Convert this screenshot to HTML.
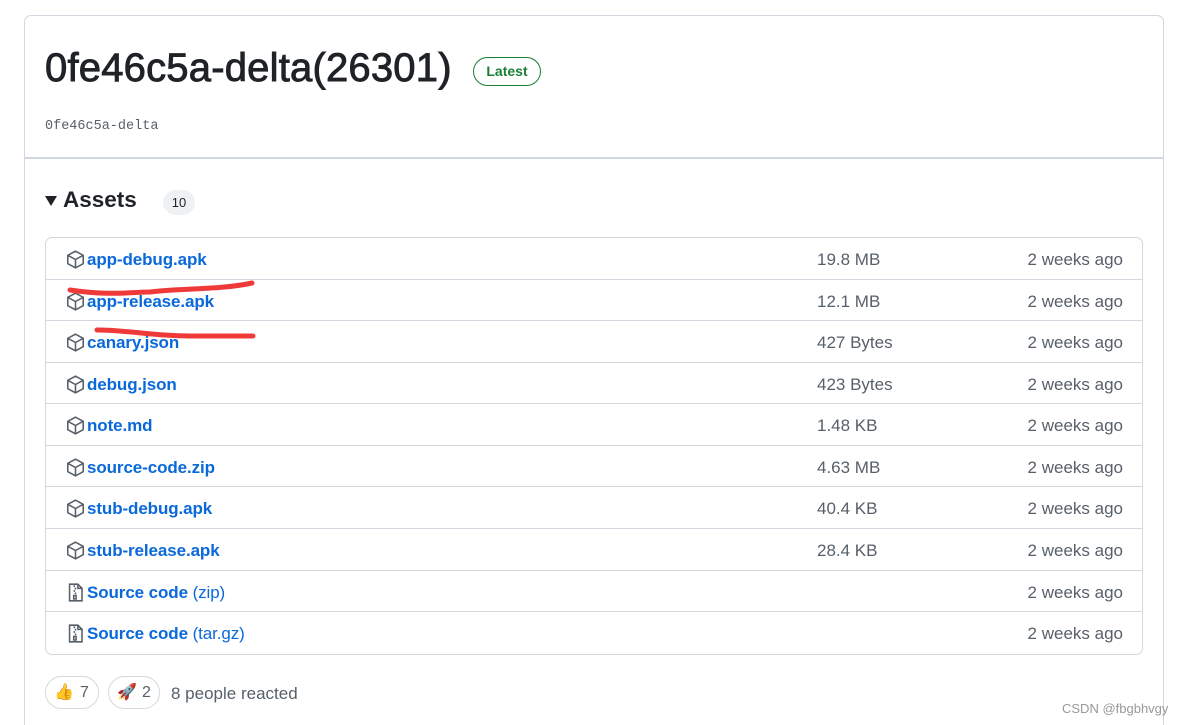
<!DOCTYPE html>
<html><head><meta charset="utf-8"><style>
*{margin:0;padding:0;box-sizing:border-box}
html{overflow:hidden;height:725px}
body{width:1183px;height:725px;background:#fff;position:relative;overflow:hidden;font-family:"Liberation Sans","DejaVu Sans",sans-serif;color:#1f2328}
.card{position:absolute;left:24px;top:15px;width:1140px;height:720px;border:1px solid #d0d7de;border-radius:7px}
.hr{position:absolute;left:24px;top:157px;width:1140px;height:2px;background:#d0d7de}
h1{position:absolute;left:45px;top:42px;font-size:40px;font-weight:normal;-webkit-text-stroke:0.9px #1f2328;line-height:52px;letter-spacing:0.2px}
.latest{position:absolute;left:473px;top:57px;width:68px;height:29px;border:1px solid #1a7f37;border-radius:15px;color:#1a7f37;font-size:14px;font-weight:600;text-align:center;line-height:27px}
.tag{position:absolute;left:45px;top:119px;font-family:"Liberation Mono","DejaVu Sans Mono",monospace;font-size:13.5px;color:#57606a}
.assets{position:absolute;left:63px;top:185px;font-size:22.5px;font-weight:600;line-height:30px}
.tri{position:absolute;left:45px;top:196px;width:0;height:0;border-left:6px solid transparent;border-right:6px solid transparent;border-top:10px solid #1f2328}
.cnt{position:absolute;left:163px;top:190px;width:32px;height:25px;background:#eff1f3;border-radius:13px;font-size:13px;text-align:center;line-height:25px}
.box{position:absolute;left:45px;top:237px;width:1098px;height:418px;border:1px solid #d0d7de;border-radius:7px}
.row{position:absolute;left:45px;width:1098px;height:42px}
.row.b{border-top:1px solid #d0d7de}
.ic{position:absolute;left:21px;top:12px}
.nm{position:absolute;left:42px;top:12px;font-size:17px;color:#0969da;font-weight:bold;white-space:nowrap;letter-spacing:-0.1px}
.nm span{font-weight:400}
.sz{position:absolute;left:772px;top:12px;font-size:17px;color:#57606a}
.dt{position:absolute;right:20px;top:12px;font-size:17px;color:#57606a}
.react{position:absolute;top:676px;height:33px;border:1px solid #d0d7de;border-radius:17px;font-size:16px;color:#57606a;line-height:31px}
.ppl{position:absolute;left:171px;top:684px;font-size:17px;color:#57606a}
.wm{position:absolute;left:1062px;top:701px;font-size:13px;color:#999;font-family:"Liberation Sans",sans-serif}
.vl{position:absolute;left:1163px;top:640px;width:1px;height:85px;background:#d0d7de}
svg.red{position:absolute;left:0;top:0}
</style></head><body>
<div class="card"></div>
<div class="hr"></div>
<h1>0fe46c5a-delta(26301)</h1>
<div class="latest">Latest</div>
<div class="tag">0fe46c5a-delta</div>
<div class="tri"></div>
<div class="assets">Assets</div>
<div class="cnt">10</div>
<div class="box"></div>

<div class="row" style="top:238px"><svg class="ic" width="19" height="19" viewBox="0 0 16 16" fill="none" stroke="#57606a" stroke-width="1.3"><path d="M8 1 14.5 4.5v7L8 15 1.5 11.5v-7z M1.5 4.5 8 8l6.5-3.5 M8 8v7"/></svg><div class="nm">app-debug.apk</div><div class="sz">19.8 MB</div><div class="dt">2 weeks ago</div></div>
<div class="row b" style="top:279px"><svg class="ic" width="19" height="19" viewBox="0 0 16 16" fill="none" stroke="#57606a" stroke-width="1.3"><path d="M8 1 14.5 4.5v7L8 15 1.5 11.5v-7z M1.5 4.5 8 8l6.5-3.5 M8 8v7"/></svg><div class="nm">app-release.apk</div><div class="sz">12.1 MB</div><div class="dt">2 weeks ago</div></div>
<div class="row b" style="top:320px"><svg class="ic" width="19" height="19" viewBox="0 0 16 16" fill="none" stroke="#57606a" stroke-width="1.3"><path d="M8 1 14.5 4.5v7L8 15 1.5 11.5v-7z M1.5 4.5 8 8l6.5-3.5 M8 8v7"/></svg><div class="nm">canary.json</div><div class="sz">427 Bytes</div><div class="dt">2 weeks ago</div></div>
<div class="row b" style="top:362px"><svg class="ic" width="19" height="19" viewBox="0 0 16 16" fill="none" stroke="#57606a" stroke-width="1.3"><path d="M8 1 14.5 4.5v7L8 15 1.5 11.5v-7z M1.5 4.5 8 8l6.5-3.5 M8 8v7"/></svg><div class="nm">debug.json</div><div class="sz">423 Bytes</div><div class="dt">2 weeks ago</div></div>
<div class="row b" style="top:403px"><svg class="ic" width="19" height="19" viewBox="0 0 16 16" fill="none" stroke="#57606a" stroke-width="1.3"><path d="M8 1 14.5 4.5v7L8 15 1.5 11.5v-7z M1.5 4.5 8 8l6.5-3.5 M8 8v7"/></svg><div class="nm">note.md</div><div class="sz">1.48 KB</div><div class="dt">2 weeks ago</div></div>
<div class="row b" style="top:445px"><svg class="ic" width="19" height="19" viewBox="0 0 16 16" fill="none" stroke="#57606a" stroke-width="1.3"><path d="M8 1 14.5 4.5v7L8 15 1.5 11.5v-7z M1.5 4.5 8 8l6.5-3.5 M8 8v7"/></svg><div class="nm">source-code.zip</div><div class="sz">4.63 MB</div><div class="dt">2 weeks ago</div></div>
<div class="row b" style="top:486px"><svg class="ic" width="19" height="19" viewBox="0 0 16 16" fill="none" stroke="#57606a" stroke-width="1.3"><path d="M8 1 14.5 4.5v7L8 15 1.5 11.5v-7z M1.5 4.5 8 8l6.5-3.5 M8 8v7"/></svg><div class="nm">stub-debug.apk</div><div class="sz">40.4 KB</div><div class="dt">2 weeks ago</div></div>
<div class="row b" style="top:528px"><svg class="ic" width="19" height="19" viewBox="0 0 16 16" fill="none" stroke="#57606a" stroke-width="1.3"><path d="M8 1 14.5 4.5v7L8 15 1.5 11.5v-7z M1.5 4.5 8 8l6.5-3.5 M8 8v7"/></svg><div class="nm">stub-release.apk</div><div class="sz">28.4 KB</div><div class="dt">2 weeks ago</div></div>
<div class="row b" style="top:570px"><svg class="ic" width="19" height="19" viewBox="0 0 16 16" fill="none" stroke="#57606a" stroke-width="1.3"><path d="M3 1h7l3.5 3.5V15H3z M10 1v3.5h3.5 M7 2v1.5 M8 4v1.5 M7 6v1.5 M8 8v1.5 M6.5 10.5h2v3h-2z"/></svg><div class="nm">Source code <span>(zip)</span></div><div class="dt">2 weeks ago</div></div>
<div class="row b" style="top:611px"><svg class="ic" width="19" height="19" viewBox="0 0 16 16" fill="none" stroke="#57606a" stroke-width="1.3"><path d="M3 1h7l3.5 3.5V15H3z M10 1v3.5h3.5 M7 2v1.5 M8 4v1.5 M7 6v1.5 M8 8v1.5 M6.5 10.5h2v3h-2z"/></svg><div class="nm">Source code <span>(tar.gz)</span></div><div class="dt">2 weeks ago</div></div>

<svg class="red" width="1183" height="725"><path d="M70 290 C110 296 130 292 150 292 C180 288 220 290 252 283" stroke="#f03a3a" stroke-width="5" fill="none" stroke-linecap="round"/><path d="M97 330 C130 330 150 336 190 336 C220 336 240 336 253 336" stroke="#f03a3a" stroke-width="5" fill="none" stroke-linecap="round"/></svg>

<div class="react" style="left:45px;width:54px"><span style="position:absolute;left:8px;font-size:16px">👍</span><span style="position:absolute;left:34px">7</span></div>
<div class="react" style="left:108px;width:52px"><span style="position:absolute;left:8px;font-size:16px">🚀</span><span style="position:absolute;left:33px">2</span></div>
<div class="ppl">8 people reacted</div>
<div class="vl"></div>
<div class="wm">CSDN @fbgbhvgy</div>
</body></html>
